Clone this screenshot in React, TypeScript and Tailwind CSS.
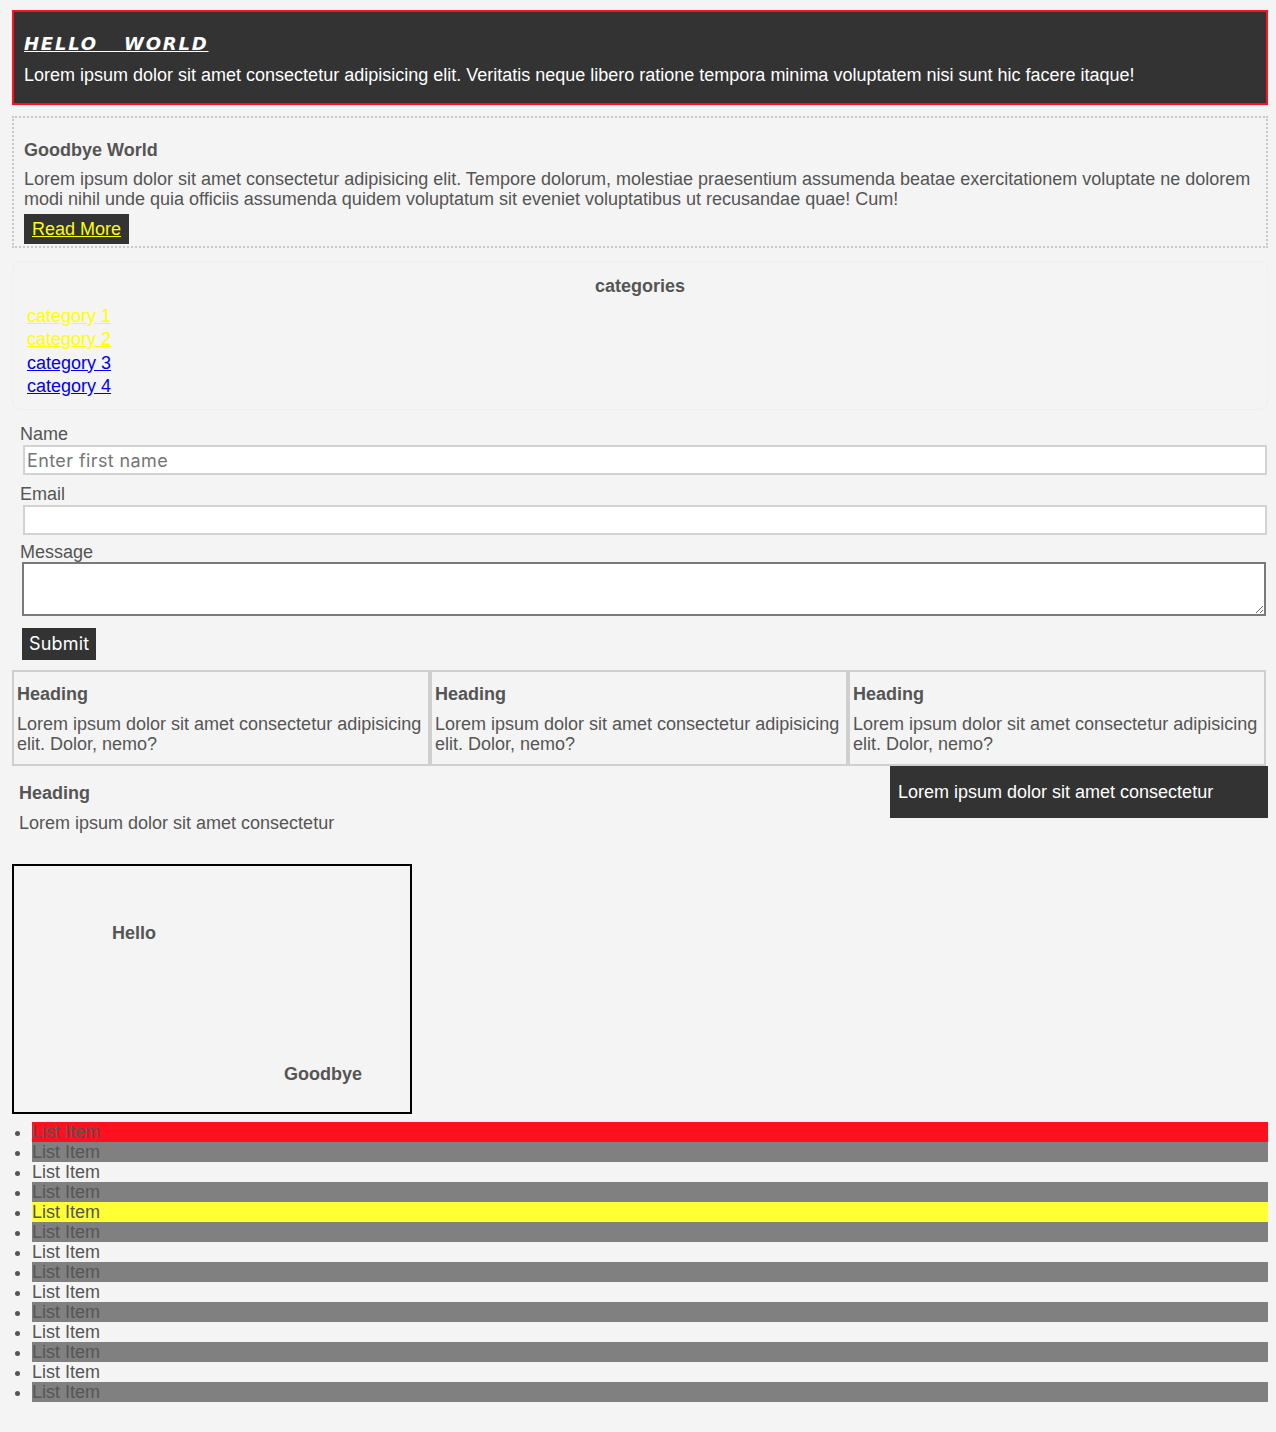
import React from 'react';

const listColors = [
  'bg-[#ff101f]',
  'bg-[#808080]',
  '',
  'bg-[#808080]',
  'bg-[#ffff33]',
  'bg-[#808080]',
  '',
  'bg-[#808080]',
  '',
  'bg-[#808080]',
  '',
  'bg-[#808080]',
  '',
  'bg-[#808080]',
];

const boxes = [1, 2, 3];

export default function App() {
  return (
    <div className="min-h-screen bg-[#f4f4f4] text-[#555] font-['Liberation_Sans',Arial,sans-serif] text-[18px] leading-[20px] pt-[10px] pl-[12px] pr-[8px] pb-[30px]">
      {/* header */}
      <header className="border-2 border-[#ff101f] bg-[#333] px-[10px] pt-[22px] pb-[18px] text-white">
        <h1 className="mb-[11px] font-['DejaVu_Sans',Verdana,sans-serif] font-bold italic uppercase underline tracking-[1.8px] [word-spacing:18px] text-[18px] leading-[20px]">
          Hello World
        </h1>
        <p>
          Lorem ipsum dolor sit amet consectetur adipisicing elit. Veritatis neque libero ratione tempora minima voluptatem nisi sunt hic facere itaque!
        </p>
      </header>

      {/* goodbye */}
      <section className="mt-[11px] border-2 border-dotted border-[#c8c8c8] px-[10px] pt-[22px] pb-[2px]">
        <h2 className="mb-[9px] font-bold">Goodbye World</h2>
        <p>
          Lorem ipsum dolor sit amet consectetur adipisicing elit. Tempore dolorum, molestiae praesentium assumenda beatae exercitationem voluptate ne dolorem modi nihil unde quia officiis assumenda quidem voluptatum sit eveniet voluptatibus ut recusandae quae! Cum!
        </p>
        <a href="#" className="mt-[5px] inline-block bg-[#333] px-2 py-[5px] text-[#ffff00] underline">
          Read More
        </a>
      </section>

      {/* categories */}
      <section className="mt-[13px] rounded-lg border border-[#f0f0f0] pl-[14px] pr-[14px] pt-[14px] pb-[11px]">
        <h3 className="mb-[9px] text-center font-bold">categories</h3>
        <ul className="leading-[23.33px]">
          <li><a href="#" className="text-[#ffff00] underline">category 1</a></li>
          <li><a href="#" className="text-[#ffff00] underline">category 2</a></li>
          <li><a href="#" className="text-[#0000ee] underline">category 3</a></li>
          <li><a href="#" className="text-[#0000ee] underline">category 4</a></li>
        </ul>
      </section>

      {/* form */}
      <form className="mt-[14px] flex flex-col pl-[8px]">
        <label>Name</label>
        <input
          type="text"
          placeholder="Enter first name"
          className="mt-px ml-[3px] mr-px h-[30px] border-2 border-[#d2d2d2] bg-white px-[2px] font-['Inter','Noto_Sans',sans-serif] text-[18px] tracking-[0.4px] text-[#333] placeholder:text-[#757575] outline-none"
        />
        <label className="mt-[9px]">Email</label>
        <input
          type="email"
          className="mt-px ml-[3px] mr-px h-[30px] border-2 border-[#d2d2d2] bg-white px-[2px] font-['Inter','Noto_Sans',sans-serif] text-[18px] outline-none"
        />
        <label className="mt-[7px]">Message</label>
        <textarea className="ml-[2px] mr-[2px] h-[54px] border-2 border-[#7a7a7a] bg-white outline-none" />
        <button
          type="button"
          className="mt-[12px] ml-[2px] self-start bg-[#333] px-[7px] py-[6px] font-['Inter','Noto_Sans',sans-serif] text-[18px] tracking-[0.2px] leading-[20px] text-white"
        >
          Submit
        </button>
      </form>

      {/* three boxes */}
      <div className="mt-[10px] grid grid-cols-[418px_418px_418px]">
        {boxes.map((b) => (
          <div key={b} className="border-2 border-[#cfcfcf] px-[3px] pt-[12px] pb-[10px]">
            <h3 className="mb-[10px] font-bold">Heading</h3>
            <p>Lorem ipsum dolor sit amet consectetur adipisicing elit. Dolor, nemo?</p>
          </div>
        ))}
      </div>

      {/* float row */}
      <div className="flex items-start justify-between">
        <div className="pl-[7px] pt-[17px]">
          <h3 className="mb-[10px] font-bold">Heading</h3>
          <p>Lorem ipsum dolor sit amet consectetur</p>
        </div>
        <div className="w-[378px] bg-[#333] px-2 py-4 text-white">
          Lorem ipsum dolor sit amet consectetur
        </div>
      </div>

      {/* positioning box */}
      <div className="relative mt-[31px] h-[250px] w-[400px] border-2 border-black">
        <h3 className="absolute left-[98px] top-[57px] font-bold">Hello</h3>
        <h3 className="absolute left-[270px] top-[198px] font-bold">Goodbye</h3>
      </div>

      {/* list */}
      <ul className="mt-[8px] list-disc pl-[20px]">
        {listColors.map((c, i) => (
          <li key={i} className={c}>
            List Item
          </li>
        ))}
      </ul>
    </div>
  );
}
